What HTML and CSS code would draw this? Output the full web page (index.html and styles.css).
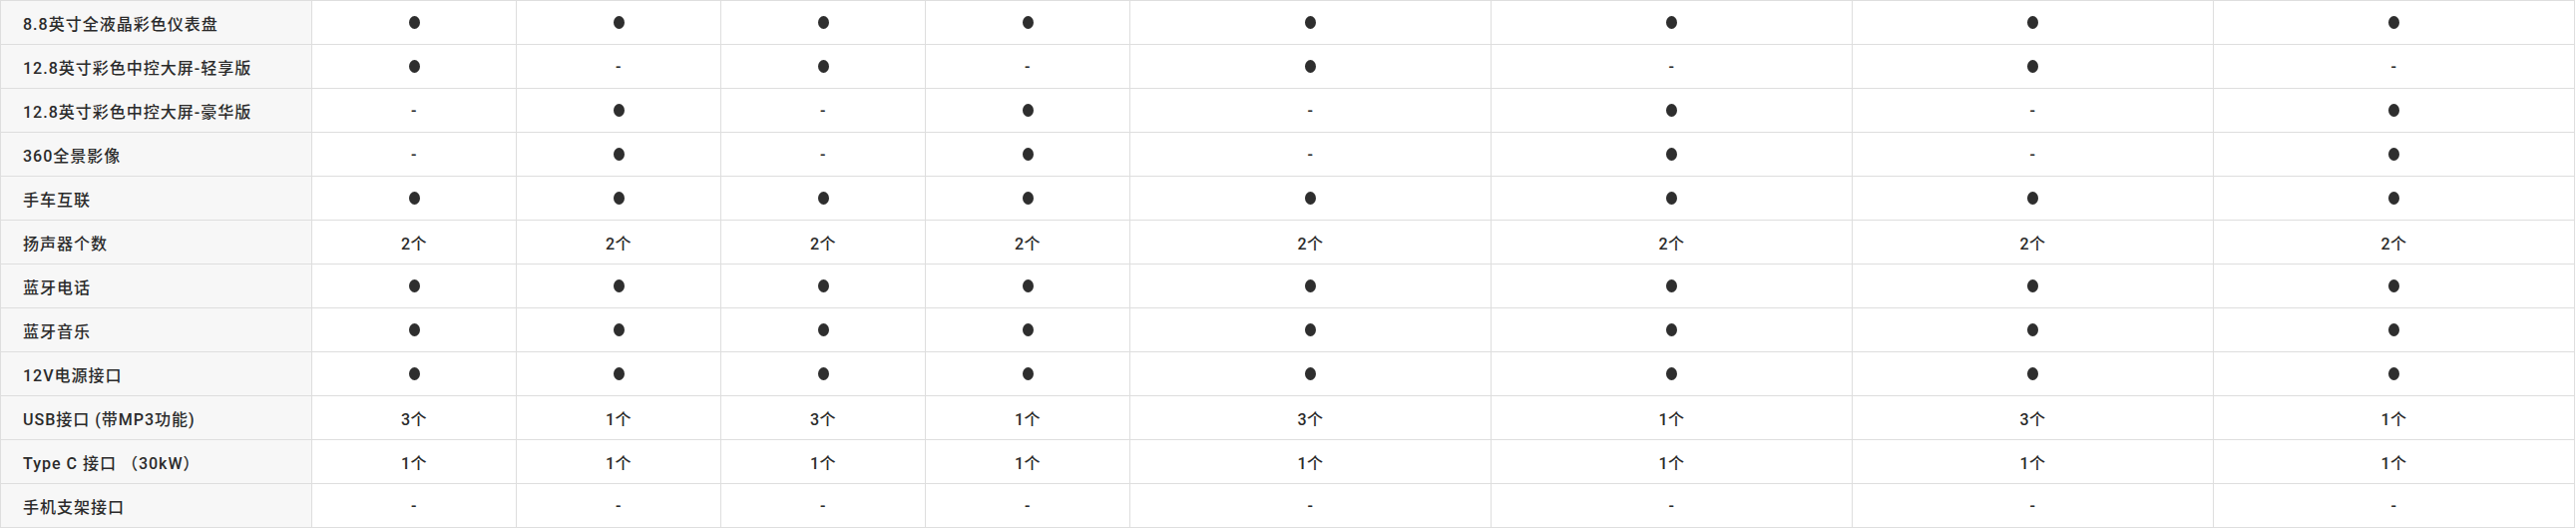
FILE: index.html
```html
<!DOCTYPE html>
<html lang="zh-CN">
<head>
<meta charset="utf-8">
<title>配置表</title>
<link rel="stylesheet" href="styles.css">
</head>
<body>
<div class="spec">
  <div class="label">8.8英寸全液晶彩色仪表盘</div>
  <div class="val"><span class="dot"></span></div><div class="val"><span class="dot"></span></div><div class="val"><span class="dot"></span></div><div class="val"><span class="dot"></span></div><div class="val"><span class="dot"></span></div><div class="val"><span class="dot"></span></div><div class="val"><span class="dot"></span></div><div class="val"><span class="dot"></span></div>

  <div class="label">12.8英寸彩色中控大屏-轻享版</div>
  <div class="val"><span class="dot"></span></div><div class="val">-</div><div class="val"><span class="dot"></span></div><div class="val">-</div><div class="val"><span class="dot"></span></div><div class="val">-</div><div class="val"><span class="dot"></span></div><div class="val">-</div>

  <div class="label">12.8英寸彩色中控大屏-豪华版</div>
  <div class="val">-</div><div class="val"><span class="dot"></span></div><div class="val">-</div><div class="val"><span class="dot"></span></div><div class="val">-</div><div class="val"><span class="dot"></span></div><div class="val">-</div><div class="val"><span class="dot"></span></div>

  <div class="label">360全景影像</div>
  <div class="val">-</div><div class="val"><span class="dot"></span></div><div class="val">-</div><div class="val"><span class="dot"></span></div><div class="val">-</div><div class="val"><span class="dot"></span></div><div class="val">-</div><div class="val"><span class="dot"></span></div>

  <div class="label">手车互联</div>
  <div class="val"><span class="dot"></span></div><div class="val"><span class="dot"></span></div><div class="val"><span class="dot"></span></div><div class="val"><span class="dot"></span></div><div class="val"><span class="dot"></span></div><div class="val"><span class="dot"></span></div><div class="val"><span class="dot"></span></div><div class="val"><span class="dot"></span></div>

  <div class="label">扬声器个数</div>
  <div class="val">2个</div><div class="val">2个</div><div class="val">2个</div><div class="val">2个</div><div class="val">2个</div><div class="val">2个</div><div class="val">2个</div><div class="val">2个</div>

  <div class="label">蓝牙电话</div>
  <div class="val"><span class="dot"></span></div><div class="val"><span class="dot"></span></div><div class="val"><span class="dot"></span></div><div class="val"><span class="dot"></span></div><div class="val"><span class="dot"></span></div><div class="val"><span class="dot"></span></div><div class="val"><span class="dot"></span></div><div class="val"><span class="dot"></span></div>

  <div class="label">蓝牙音乐</div>
  <div class="val"><span class="dot"></span></div><div class="val"><span class="dot"></span></div><div class="val"><span class="dot"></span></div><div class="val"><span class="dot"></span></div><div class="val"><span class="dot"></span></div><div class="val"><span class="dot"></span></div><div class="val"><span class="dot"></span></div><div class="val"><span class="dot"></span></div>

  <div class="label">12V电源接口</div>
  <div class="val"><span class="dot"></span></div><div class="val"><span class="dot"></span></div><div class="val"><span class="dot"></span></div><div class="val"><span class="dot"></span></div><div class="val"><span class="dot"></span></div><div class="val"><span class="dot"></span></div><div class="val"><span class="dot"></span></div><div class="val"><span class="dot"></span></div>

  <div class="label">USB接口 (带MP3功能)</div>
  <div class="val">3个</div><div class="val">1个</div><div class="val">3个</div><div class="val">1个</div><div class="val">3个</div><div class="val">1个</div><div class="val">3个</div><div class="val">1个</div>

  <div class="label">Type C 接口 （30kW）</div>
  <div class="val">1个</div><div class="val">1个</div><div class="val">1个</div><div class="val">1个</div><div class="val">1个</div><div class="val">1个</div><div class="val">1个</div><div class="val">1个</div>

  <div class="label">手机支架接口</div>
  <div class="val">-</div><div class="val">-</div><div class="val">-</div><div class="val">-</div><div class="val">-</div><div class="val">-</div><div class="val">-</div><div class="val">-</div>
</div>
</body>
</html>
```

FILE: styles.css
```css
html, body {
  margin: 0;
  padding: 0;
  background: #ffffff;
}

.spec {
  display: grid;
  grid-template-columns: 311px repeat(4, 204px) repeat(4, 361px);
  grid-auto-rows: 43px;
  gap: 1px;
  width: 2581px;
  box-sizing: border-box;
  background: #dedede;
  border: 1px solid #dedede;
  font-family: Roboto, "Noto Sans CJK SC", sans-serif;
  font-size: 16px;
  font-weight: 500;
  color: #2b2b2b;
}

.label {
  background: #f7f7f7;
  display: flex;
  align-items: center;
  padding-left: 22px;
  white-space: nowrap;
  letter-spacing: 1px;
}

.val {
  background: #ffffff;
  display: flex;
  align-items: center;
  justify-content: center;
  letter-spacing: 0.5px;
}

.dot {
  display: inline-block;
  width: 11px;
  height: 13px;
  border-radius: 50%;
  background: #2e2e2e;
}
```
